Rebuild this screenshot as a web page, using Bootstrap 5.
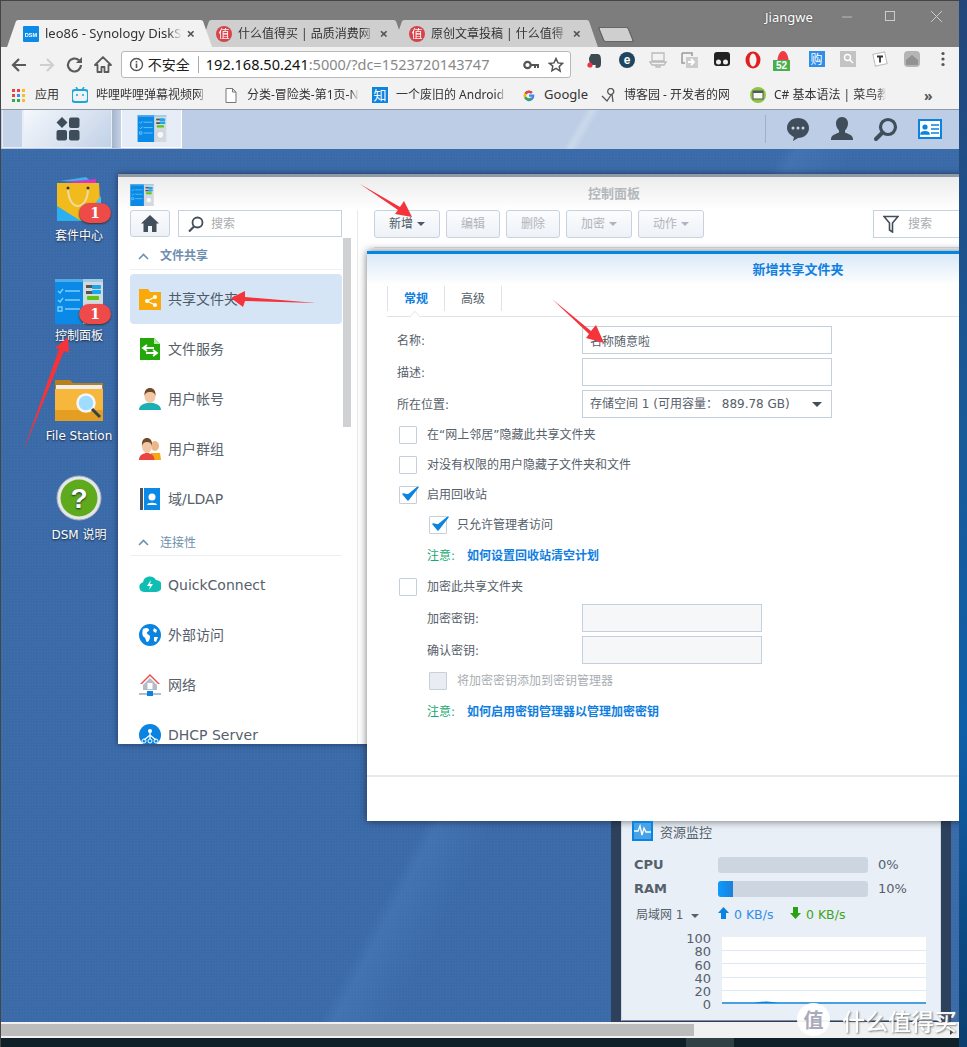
<!DOCTYPE html>
<html lang="zh"><head><meta charset="utf-8"><title>DSM</title>
<link href="https://cdn.jsdelivr.net/npm/bootstrap@5.3.0/dist/css/bootstrap.min.css" rel="stylesheet">
<style>
html,body{margin:0;height:1047px;width:967px;overflow:hidden;background:#2b5a94}
body{font-family:"Noto Sans","Noto Sans CJK SC",sans-serif;font-size:13px;color:#222}
.scr{position:relative;width:967px;height:1047px;overflow:hidden;background:linear-gradient(180deg,#22467a 0,#1a5a98 40%,#0e5fa8 70%,#0b3f6f 100%)}
.win{width:959px;height:1047px;background:#0f1f2a;border-left:1px solid #454545}
.titlebar{height:47px;background:#7d7d7d;border-top:1px solid #454545;position:relative}
.tabstrip{position:absolute;left:6px;bottom:0;height:27px;filter:drop-shadow(0 0 .6px #444)}
.ctab{width:205px;height:27px;background:#cfcfcf;margin-right:-12px;padding:0 17px 0 16px;clip-path:polygon(0 100%,9px 3%,11px 0,calc(100% - 11px) 0,calc(100% - 9px) 3%,100% 100%)}
.ctab.on{background:#f2f2f2;position:relative;z-index:2}
.ctabtxt{flex:1;white-space:nowrap;overflow:hidden;font-size:12px;color:#333;-webkit-mask-image:linear-gradient(90deg,#000 90%,transparent);mask-image:linear-gradient(90deg,#000 90%,transparent);margin-left:6px;font-family:"Noto Sans","Noto Sans CJK SC",sans-serif}
.ctab.on .ctabtxt{font-size:13px}
.ctabx{font-size:15px;color:#555;line-height:1;font-weight:700;margin-left:4px}
.newtab{width:30px;height:15px;background:#cfcfcf;margin:0 0 5px 15px;transform:skewX(22deg);border:1px solid #666;border-radius:2px;align-self:flex-end}
.wuser{position:absolute;left:764px;top:7px;color:#fff;font-size:13px;text-shadow:0 0 2px #444}
.wbtns{position:absolute;left:840px;top:9px;gap:30px}
.toolb{height:33px;background:#f2f2f2;padding:4px 0 0 4px}
.navic{width:28px;height:28px}
.omni{width:451px;height:27px;background:#fff;border:1px solid #b8b8b8;border-radius:3px;margin-left:4px;padding:0 6px 0 7px}
.sep1{width:1px;height:17px;background:#aaa;margin:0 7px 0 8px}
.urlt{font-size:14.5px;color:#888;white-space:nowrap;flex:1;overflow:hidden}
.urlt b{font-weight:400;color:#111}
.exts{margin-left:8px;width:380px}
.ext{width:32px;height:24px;position:relative}
.bmk{height:30px;background:#f2f2f2;border-bottom:1px solid #8d99a8;font-size:12px;color:#333;white-space:nowrap;padding-top:1px}
.bm{height:28px;flex:none;padding-left:0;overflow:hidden}
.bm span{display:block;flex:1;overflow:hidden;-webkit-mask-image:linear-gradient(90deg,#000 92%,transparent);mask-image:linear-gradient(90deg,#000 92%,transparent)}
.dbar{height:39px;background:#bccde5;position:relative}
.dbar::after{content:"";position:absolute;left:520px;top:0;width:120px;height:39px;background:linear-gradient(120deg,transparent 45%,#ccd9eb 50%,transparent 56%)}
.dcell{height:38px;border:1px solid #e8eef6;border-top:0;background:#c4d3e8}
.dhome{width:89px;background:linear-gradient(135deg,#f5f8fc,#c2d1e7)}
.dgap{width:9px;height:38px;background:linear-gradient(90deg,#a6b5ca,#c4d2e6)}
.dapp{width:61px;background:#e6edf6;border-color:#fff}
.dsep{width:1px;height:28px;background:#dfe7f2;border-left:1px solid #9fb0c8;margin-right:2px}
.dright{margin-left:auto;position:relative;z-index:1;padding-right:17px;gap:18px;height:38px}
.desk{position:relative;height:873px;overflow:hidden;background-color:#3b6aa9;background-image:linear-gradient(118deg,transparent 55%,rgba(80,130,190,.35) 56%,transparent 60%),radial-gradient(rgba(255,255,255,.05) 1px,transparent 1px);background-size:auto,3px 3px}
.dico{position:absolute;width:100px;text-align:center;color:#fff;font-size:12px;font-family:"DejaVu Sans","Noto Sans CJK SC",sans-serif;text-shadow:0 1px 2px #123}
.dico svg{display:block;margin:0 auto}
.dico .lbl{margin-top:5px;line-height:16px}
.redb{position:absolute;left:50px;width:32px;height:20px;border-radius:10px;background:#ee4a4a;color:#fff;text-align:center;font:700 14px/20px "DejaVu Serif",serif;box-shadow:0 1px 2px #333;text-shadow:none}
.cpw{position:absolute;left:117px;top:25px;width:992px;height:570px;background:#fff;border-top:3px solid #8f9aa5;box-shadow:0 0 6px rgba(0,0,0,.5);font-family:"DejaVu Sans","Noto Sans CJK SC",sans-serif}
.cphead{height:33px;background:linear-gradient(180deg,#ececec,#fff);padding-left:12px;position:relative}
.cptitle{position:absolute;left:0;right:0;top:7px;text-align:center;font-size:13px;font-weight:700;color:#b4b8bc}
.cpside{width:240px;padding-left:12px;position:relative;border-right:1px solid #e6e9ee;height:534px;overflow:hidden}
.sbar{position:absolute;left:225px;top:28px;width:8px;height:189px;background:#cfd1d3}
.hbtn{width:40px;height:27px;padding:0;border:1px solid #c6d2e0;background:linear-gradient(#fafbfc,#eef2f7);border-radius:3px}
.sbox{width:164px;height:27px;margin-left:8px;border:1px solid #c6d2e0;background:#fff;padding-left:9px;color:#a9acb0;font-size:12px;gap:7px}
.side{width:212px}
.sechd{height:32px;border-bottom:1px solid #eceff3;color:#6f8fae;font-size:12px;font-weight:700;padding:6px 0 0 8px;gap:11px;margin-bottom:4px}
.sechd.first{height:33px}
.sitem{height:50px;border:0;padding:0 0 0 9px;border-radius:4px;font-size:14px;color:#56606a;background:transparent;gap:7px;white-space:nowrap}
.sitem.active{background:#d5e5f6;color:#4d5b68;margin:0;z-index:0}
.sitem svg{flex:none}
.cpmain{flex:1;padding:0 0 0 16px}
.tbar{height:38px;border-bottom:1px solid #dbe3ee;gap:6px;align-items:flex-start}
.tbtn{--bs-btn-disabled-color:#b0b5bb;--bs-btn-disabled-border-color:#c6d2e0;--bs-btn-disabled-bg:#f4f6f9;--bs-btn-disabled-opacity:1;height:28px;padding:0 14px;font-size:12px;border:1px solid #c6d2e0;border-radius:3px;background:linear-gradient(#fbfcfd,#eef2f7);color:#b0b5bb;font-family:inherit;gap:4px;white-space:nowrap}
.tbtn.act{color:#4d5b68;margin-right:0}
.tsearch{margin-left:163px;width:222px;height:28px;border:1px solid #c6d2e0;background:#fff;padding-left:9px;color:#a9acb0;font-size:12px;gap:9px}
.crt{width:0;height:0;border:4px solid transparent;border-top-color:currentColor;border-bottom:0}
.dlg{position:absolute;left:366px;top:102px;width:862px;height:570px;background:#fff;border-top:3px solid #0086e5;box-shadow:0 0 8px rgba(0,0,0,.55);font-family:"DejaVu Sans","Noto Sans CJK SC",sans-serif;font-size:12px;color:#56606a}
.dlghd{height:31px;background:linear-gradient(#d9e9f8,#fff);text-align:center;color:#0f7ee0;font-weight:700;font-size:13px;line-height:32px;flex:none}
.dtabs{margin-left:20px;height:32px;border-bottom:1px solid #dfe3e8;align-items:flex-start;flex:none;position:relative}
.dtab{width:57px;height:25px;border-left:1px solid #dde3ea;text-align:center;line-height:26px;margin-top:1px}
.dtab.last{border-right:1px solid #dde3ea;width:58px}
.dtab.on{color:#0f7ee0;font-weight:700;position:relative}
.dtab.on::after{content:"";position:absolute;left:21px;top:25px;width:12px;height:12px;background:#fff;border:1px solid #dfe3e8;border-width:1px 0 0 1px;transform:rotate(45deg) scale(.7)}
.frow{padding-left:30px;height:28px;margin-bottom:4px}
.frow.sub{padding-left:60px}
.flbl{width:185px;flex:none;padding-top:1px}
.frow.sub .flbl{width:155px}
.finp{width:250px;height:28px;border:1px solid #c6d0dc;border-radius:0;padding:0 7px;font-size:12px;color:#56606a;font-family:inherit;box-shadow:none}
.finp.short{width:180px;background:#f5f7f9}
.fsel{gap:8px;justify-content:space-between;padding-right:9px}
.crow{height:30px;padding-left:32px;gap:10px;flex:none}
.crow.ind{padding-left:62px}
.crow.nt{padding-left:60px;padding-top:1px;gap:12px;font-weight:400}
.cbx{width:18px;height:18px;border:1px solid #c6d0dc;background:#fff;position:relative;flex:none;border-radius:1px}
.cbx.dis{background:#e9edf2}
.cbx svg{position:absolute;left:0;top:-3px}
.dimt{color:#a8adb3}
.note{color:#19a974}
.lnk{color:#0f7ee0;font-weight:700;text-decoration:none}
.dfoot{border-top:2px solid #e6e8eb;height:46px;flex:none;margin-top:auto}
.mon{position:absolute;left:610px;top:640px;width:340px;height:233px;background:#2d415d;padding:0 10px}
.monin{background:#e9eff7;height:232px;padding:64px 11px 0;font-family:"DejaVu Sans","Noto Sans CJK SC",sans-serif;font-size:12px;color:#56606a;border:1px solid #cfd8e4;border-top:0;border-bottom-color:#7f8da0}
.mrow{height:24px;font-weight:700;font-size:13px}
.mlab{width:85px;flex:none;padding-left:1px;color:#56606a}
.mbar{width:150px;height:16px;border-radius:3px;background:#cdd6e0;overflow:hidden;flex:none}
.mfill{height:100%;background:linear-gradient(90deg,#0d9bff,#1c7fdb)}
.mpct{font-weight:400;font-size:13px;margin-left:10px}
.charty{width:78px;flex:none;text-align:right;font-size:13px;line-height:13.3px}
.chartb{width:204px;height:67px;background:#fff;margin-left:11px;margin-top:5px}
.hsb{height:16px;background:#f1f1f1;padding:2px 0;position:relative}
.hsb i{display:block;width:693px;height:12px;background:#bcbcbc}
.hsb u{position:absolute;right:4px;top:5px;border:4px solid transparent;border-left:5px solid #444;border-right:0;text-decoration:none}
.osb{height:9px;background:#0f2029}
.osb i{display:block;margin-left:685px;width:48px;height:9px;background:#2f4144}
.rstrip{width:7px;height:1047px;flex:none}
.wm{position:absolute;left:797px;top:1003px;pointer-events:none;gap:12px}
.wmc{width:33px;height:33px;border-radius:50%;background:rgba(255,255,255,.93);color:#aab;font:700 20px/33px "Noto Sans CJK SC",sans-serif;text-align:center}
.wmt{color:#fff;font:500 23px/30px "Noto Sans CJK SC",sans-serif;text-shadow:1px 1px 2px #777;white-space:nowrap;opacity:.95}
.over{position:absolute;left:0;top:0;pointer-events:none}
</style></head><body>
<svg width="0" height="0" class="position-absolute">
<defs>
<symbol id="cp" viewBox="0 0 48 45"><rect width="28" height="45" fill="#0a8ae6"/><rect x="28" width="20" height="45" fill="#d3dade"/><rect width="48" height="3" fill="#7fc1ef" opacity=".6"/><g stroke="#7cd0ff" stroke-width="1.3" fill="none"><path d="M3 12l2 2 3-4M10 12h15M3 21l2 2 3-4M10 21h15M10 30h15M3 28h4v4H3z"/></g><rect x="31" y="6" width="12" height="3" fill="#555"/><rect x="37" y="6" width="9" height="4" rx="1" fill="#19a7f0"/><rect x="31" y="12" width="12" height="3" fill="#555"/><rect x="37" y="11" width="9" height="4" rx="1" fill="#19a7f0"/><rect x="32" y="17" width="12" height="4" rx="1" fill="#5cc414"/><circle cx="38" cy="33" r="6" fill="#f4f6f8" stroke="#bbc" /></symbol>
</defs></svg>
<div class="scr d-flex">
<div class="win d-flex flex-column">
 <div class="titlebar flex-none">
  <div class="tabstrip d-flex">
   <div class="ctab on d-flex align-items-center"><svg width="16" height="16" viewBox="0 0 16 16"><rect width="16" height="16" rx="1" fill="#0b8ae8"/><text x="8" y="10.5" font-size="5.6" font-weight="700" fill="#fff" text-anchor="middle" font-family="Liberation Sans">DSM</text></svg><span class="ctabtxt">leo86 - Synology DiskS</span><span class="ctabx">×</span></div>
   <div class="ctab d-flex align-items-center"><svg width="16" height="16" viewBox="0 0 16 16"><circle cx="8" cy="8" r="8" fill="#d8424a"/><text x="8" y="12" font-size="11" fill="#fff" text-anchor="middle" font-family="Noto Sans CJK SC">值</text></svg><span class="ctabtxt">什么值得买 | 品质消费网</span><span class="ctabx">×</span></div>
   <div class="ctab d-flex align-items-center"><svg width="16" height="16" viewBox="0 0 16 16"><circle cx="8" cy="8" r="8" fill="#d8424a"/><text x="8" y="12" font-size="11" fill="#fff" text-anchor="middle" font-family="Noto Sans CJK SC">值</text></svg><span class="ctabtxt">原创文章投稿 | 什么值得</span><span class="ctabx">×</span></div>
   <div class="newtab"></div>
  </div>
  <div class="wuser">Jiangwe</div>
  <div class="wbtns d-flex align-items-center">
   <svg width="12" height="12"><path d="M1 6h10" stroke="#bbb"/></svg>
   <svg width="12" height="12" style="margin-left:2px"><rect x=".5" y=".5" width="9" height="9" fill="none" stroke="#ccc"/></svg>
   <svg width="14" height="14" style="margin-left:3px"><path d="M1 1l11 11M12 1L1 12" stroke="#ccc"/></svg>
  </div>
 </div>
 <div class="toolb d-flex flex-none">
  <svg class="navic" viewBox="0 0 28 28"><path d="M21 14H9M14 8l-6 6 6 6" fill="none" stroke="#5a5a5a" stroke-width="2.2"/></svg>
  <svg class="navic" viewBox="0 0 28 28"><path d="M7 14h12M14 8l6 6-6 6" fill="none" stroke="#cfcfcf" stroke-width="2.2"/></svg>
  <svg class="navic" viewBox="0 0 28 28"><path d="M20 14a6.5 6.5 0 1 1-2-4.7" fill="none" stroke="#5a5a5a" stroke-width="2.2"/><path d="M21 6v6h-6z" fill="#5a5a5a"/></svg>
  <svg class="navic" viewBox="0 0 28 28"><path d="M14 6L6 14h2.5v7h4v-5h3v5h4v-7H22z" fill="none" stroke="#5a5a5a" stroke-width="1.8" stroke-linejoin="round"/></svg>
  <div class="omni d-flex align-items-center flex-none">
   <svg width="15" height="15" viewBox="0 0 15 15"><circle cx="7.5" cy="7.5" r="6" fill="none" stroke="#555" stroke-width="1.4"/><path d="M7.5 6.5v4.5M7.5 4v1.6" stroke="#555" stroke-width="1.6"/></svg>
   <span class="ms-1" style="font-size:14px">不安全</span><span class="sep1"></span>
   <span class="urlt"><b>192.168.50.241</b>:5000/?dc=1523720143747</span>
   <svg width="17" height="12" viewBox="0 0 17 12" class="ms-1"><circle cx="4.5" cy="6" r="3.2" fill="none" stroke="#555" stroke-width="2.2"/><path d="M8 6h8M12 6v3M15 6v3" stroke="#555" stroke-width="2"/></svg>
   <svg width="16" height="16" viewBox="0 0 16 16" class="ms-2"><path d="M8 1.5l2 4.4 4.6.5-3.4 3.2.9 4.6L8 11.4 3.900 13.700l.9-4.600L1.400 6.400l4.600-.5z" fill="none" stroke="#555" stroke-width="1.5"/></svg>
  </div>
  <div class="exts d-flex align-items-center" style="height:24px">
   <div class="ext d-flex justify-content-center"><svg width="16" height="18" viewBox="0 0 16 18"><path d="M4 3h6c3 0 4 2 4 6v4c0 3-2 4-4 4-2 0-2-2-1-3H6C3 14 2 11 2 7z" fill="#3d4a52"/><circle cx="3" cy="14" r="2.600" fill="#f03040"/></svg></div>
   <div class="ext d-flex justify-content-center"><svg width="18" height="18" viewBox="0 0 18 18"><circle cx="9" cy="9" r="8" fill="#20465f"/><text x="9" y="13" font-size="12" font-weight="700" fill="#fff" text-anchor="middle" font-family="Liberation Sans">e</text></svg></div>
   <div class="ext d-flex justify-content-center"><svg width="18" height="18" viewBox="0 0 18 18"><path d="M3 2h12v8H3zM1 11h16l-2 3H3zM7 14h4v2H7z" fill="none" stroke="#bbb" stroke-width="1.3"/></svg></div>
   <div class="ext d-flex justify-content-center"><svg width="18" height="18" viewBox="0 0 18 18"><path d="M1 2h10v3M1 2v10h3" fill="none" stroke="#999" stroke-width="1.5"/><rect x="5" y="6" width="12" height="11" fill="#ccc"/><path d="M7 11h5M10 8l3 3-3 3" fill="none" stroke="#fff" stroke-width="1.800"/></svg></div>
   <div class="ext d-flex justify-content-center"><svg width="16" height="16" viewBox="0 0 16 16"><rect y="1" width="16" height="14" rx="3" fill="#222"/><circle cx="4.500" cy="11" r="2.500" fill="#eee"/><circle cx="11.500" cy="11" r="2.500" fill="#eee"/></svg></div>
   <div class="ext d-flex justify-content-center"><svg width="16" height="18" viewBox="0 0 16 18"><ellipse cx="8" cy="9" rx="7.500" ry="8.500" fill="#e02020"/><ellipse cx="8" cy="9" rx="3.500" ry="6.500" fill="#f3f3f3"/></svg></div>
   <div class="ext d-flex justify-content-center"><svg width="12" height="16" viewBox="0 0 12 16" class="position-absolute" style="left:8px;top:-1px"><path d="M6 1c3 0 5.500 5 5.500 9s-2 5-5.500 5S.5 14 .5 10 3 1 6 1z" fill="#ee3c45"/></svg><span class="position-absolute text-white text-center" style="left:4px;top:9px;width:17px;height:11px;background:#4aae4e;font:700 10px/11px 'Liberation Sans',sans-serif">52</span></div>
   <div class="ext d-flex justify-content-center"><span class="text-white text-center" style="width:16px;height:16px;background:#2f8ee8;font:12px/16px 'Noto Sans CJK SC',sans-serif">购</span></div>
   <div class="ext d-flex justify-content-center"><svg width="16" height="16" viewBox="0 0 16 16"><rect width="16" height="16" fill="#c3c3c3"/><circle cx="7.500" cy="6.500" r="3" fill="none" stroke="#fff" stroke-width="1.400"/><path d="M10 9l3 3" stroke="#fff" stroke-width="1.500"/></svg></div>
   <div class="ext d-flex justify-content-center"><svg width="16" height="16" viewBox="0 0 16 16"><rect x="2" y="2" width="12" height="12" fill="#fff" stroke="#bbb" transform="rotate(-12 8 8)"/><path d="M5 5.500h6M8 5.500v6" stroke="#333" stroke-width="1.800"/></svg></div>
   <div class="ext d-flex justify-content-center"><svg width="16" height="16" viewBox="0 0 16 16"><rect width="16" height="16" rx="4" fill="#b5b5b5"/><path d="M2 9l6-5 6 5v5H2z" fill="#929292"/></svg></div>
   <div class="ext d-flex justify-content-center"><svg width="4" height="16" viewBox="0 0 4 16"><circle cx="2" cy="2.500" r="1.600" fill="#555"/><circle cx="2" cy="8" r="1.600" fill="#555"/><circle cx="2" cy="13.500" r="1.600" fill="#555"/></svg></div>
  </div>
 </div>
 <div class="bmk d-flex align-items-center flex-none">
  <div class="bm d-flex align-items-center" style="margin-left:11px;width:47px;gap:10px"><svg width="13" height="13" viewBox="0 0 13 13"><g><rect width="3" height="3" fill="#e8453c"/><rect x="5" width="3" height="3" fill="#e8453c"/><rect x="10" width="3" height="3" fill="#f9bb2d"/><rect y="5" width="3" height="3" fill="#e8453c"/><rect x="5" y="5" width="3" height="3" fill="#4285f4"/><rect x="10" y="5" width="3" height="3" fill="#f9bb2d"/><rect y="10" width="3" height="3" fill="#34a853"/><rect x="5" y="10" width="3" height="3" fill="#34a853"/><rect x="10" y="10" width="3" height="3" fill="#f9bb2d"/></g></svg>应用</div>
  <div class="bm d-flex align-items-center" style="margin-left:13px;width:134px;gap:8px"><svg width="16" height="16" viewBox="0 0 16 16" class="flex-none"><rect y="3" width="16" height="12" rx="3" fill="none" stroke="#1ca6dd" stroke-width="2"/><path d="M4 0l2 3M12 0l-2 3" stroke="#1ca6dd" stroke-width="1.500"/><path d="M5 7v2M11 7v2" stroke="#1ca6dd" stroke-width="1.500"/></svg><span>哔哩哔哩弹幕视频网</span></div>
  <div class="bm d-flex align-items-center" style="margin-left:19px;width:134px;gap:10px"><svg width="12" height="15" viewBox="0 0 12 15" class="flex-none"><path d="M1 .5h6.500L11 4v10.500H1zM7.500.5V4H11" fill="#fff" stroke="#777"/></svg><span>分类-冒险类-第1页-N</span></div>
  <div class="bm d-flex align-items-center" style="margin-left:13px;width:134px;gap:8px"><span class="text-white text-center flex-none" style="flex:none;width:16px;height:16px;background:#0e84e0;font:13px/16px 'Noto Sans CJK SC',sans-serif;-webkit-mask-image:none;mask-image:none">知</span><span>一个废旧的 Android</span></div>
  <div class="bm d-flex align-items-center" style="margin-left:17px;width:65px;gap:9px;font-size:13px"><svg width="15" height="15" viewBox="0 0 15 15" class="flex-none"><path d="M13.500 6.200H7.500v2.800h3.400a3.600 3.600 0 1 1-1-3.700l2-2A6.500 6.500 0 1 0 14 7.500c0-.5 0-.9-.5-1.300z" fill="#4285f4"/><path d="M1.800 4.200l2.400 1.800a3.600 3.600 0 0 1 5.700-.7l2-2a6.500 6.500 0 0 0-10.100.9z" fill="#ea4335"/><path d="M1.800 10.800l2.400-1.800a3.600 3.600 0 0 1 0-3L1.800 4.200a6.500 6.500 0 0 0 0 6.600z" fill="#fbbc05"/><path d="M1.800 10.800a6.500 6.500 0 0 0 10 1l-2.200-1.700a3.600 3.600 0 0 1-5.400-1.100z" fill="#34a853"/></svg>Google</div>
  <div class="bm d-flex align-items-center" style="margin-left:13px;width:135px;gap:8px"><svg width="15" height="15" viewBox="0 0 15 15" class="flex-none"><path d="M1 8l5 5 4-6M8 1a3 3 0 1 1 0 5 3 3 0 0 1 0-5M11 6l1 8" fill="none" stroke="#555" stroke-width="1.300"/></svg><span>博客园 - 开发者的网</span></div>
  <div class="bm d-flex align-items-center" style="margin-left:14px;width:136px;gap:8px"><svg width="16" height="16" viewBox="0 0 16 16" class="flex-none"><circle cx="8" cy="8" r="8" fill="#8ec63f"/><rect x="3" y="4" width="10" height="8" fill="#f4f8ee" stroke="#556"/><rect x="3" y="4" width="10" height="2" fill="#556"/></svg><span>C# 基本语法 | 菜鸟教</span></div>
  <div class="flex-none fw-bold" style="margin-left:38px;color:#555;font-size:14px">»</div>
 </div>
 <div class="dbar d-flex align-items-start flex-none">
  <div class="dcell" style="width:21px;margin-left:1px"></div>
  <div class="dcell dhome d-flex align-items-center justify-content-center"><svg width="24" height="24" viewBox="0 0 24 24"><path d="M6 0l5.500 5.500L6 11 .5 5.500z" fill="#3f4c5a"/><rect x="13" y="0.500" width="10.500" height="10.500" rx="2" fill="#3f4c5a"/><rect x=".5" y="13" width="10.500" height="10.500" rx="2" fill="#3f4c5a"/><rect x="13" y="13" width="10.500" height="10.500" rx="2" fill="#3f4c5a"/></svg></div>
  <div class="dgap"></div>
  <div class="dcell dapp d-flex align-items-center justify-content-center"><svg width="32" height="27"><use href="#cp"/></svg></div>
  <div class="dright d-flex align-items-center">
   <div class="dsep"></div>
   <svg width="24" height="24" viewBox="0 0 24 24"><path d="M12 1c6 0 11 4 11 10s-5 10-11 10l-5 3 1-4C4 18 1 15 1 11 1 5 6 1 12 1z" fill="#404d5b"/><circle cx="7" cy="11" r="1.500" fill="#c6d4e7"/><circle cx="12" cy="11" r="1.500" fill="#c6d4e7"/><circle cx="17" cy="11" r="1.500" fill="#c6d4e7"/></svg>
   <svg width="24" height="24" viewBox="0 0 24 24" style="margin-left:2px"><path d="M12 0c4 0 6 3 6 6.500 0 3-1.500 5.500-3 7v2c3 1.500 8 2.500 8 6.500v1H1v-1c0-4 5-5 8-6.500v-2c-1.500-1.500-3-4-3-7C6 3 8 0 12 0z" fill="#404d5b"/></svg>
   <svg width="24" height="24" viewBox="0 0 24 24" style="margin-left:2px"><circle cx="14" cy="10" r="7.500" fill="none" stroke="#404d5b" stroke-width="3.200"/><path d="M8.500 15.500L2 22" stroke="#404d5b" stroke-width="4" stroke-linecap="round"/></svg>
   <svg width="24" height="20" viewBox="0 0 24 20" style="margin-left:2px"><rect x="1" y="1" width="22" height="18" fill="#fff" stroke="#0a84e0" stroke-width="2"/><circle cx="7" cy="8" r="2.600" fill="#0a84e0"/><path d="M3 15c0-3 8-3 8 0zM13 6h8M13 10h8M13 14h8" fill="#0a84e0" stroke="#0a84e0" stroke-width="1.500"/></svg>
  </div>
 </div>
 <div class="desk flex-none">
  <div class="dico" style="left:28px;top:27px"><svg width="46" height="46" viewBox="0 0 46 46"><path d="M4 5l26-4 6 5z" fill="#37b5e8"/><path d="M8 6l32-3v6z" fill="#d636c8"/><path d="M1 7h42l2 38H1z" fill="#f2bb1d"/><path d="M1 30l24 15H1z" fill="#2ab0ee"/><path d="M45 20l0 25H24z" fill="#3fc2f4"/><path d="M12 12c0 24 20 24 20 0" fill="none" stroke="#f1d9a0" stroke-width="2"/><circle cx="12" cy="12" r="1.500" fill="#333"/><circle cx="32" cy="12" r="1.500" fill="#333"/></svg><span class="redb" style="top:27px">1</span><div class="lbl" style="margin-top:6px">套件中心</div></div>
  <div class="dico" style="left:28px;top:130px"><svg width="48" height="45"><use href="#cp"/></svg><span class="redb" style="top:25px">1</span><div class="lbl" style="margin-top:4px">控制面板</div></div>
  <div class="dico" style="left:28px;top:231px"><svg width="48" height="41" viewBox="0 0 48 41"><path d="M0 0h15l3 3h30v38H0z" fill="#b87f1d"/><rect x="1" y="5" width="46" height="6" fill="#eee"/><path d="M0 9h48v32H0z" fill="#f6b73c"/><path d="M0 30h48v11H0z" fill="#e49f22"/><circle cx="31" cy="23" r="8.500" fill="#9fdcff" stroke="#f6f6f6" stroke-width="2.500"/><path d="M37 29l8 8" stroke="#33404d" stroke-width="3"/></svg><div class="lbl" style="margin-top:7px">File Station</div></div>
  <div class="dico" style="left:28px;top:326px"><svg width="46" height="46" viewBox="0 0 46 46"><circle cx="23" cy="23" r="22" fill="#e3e7ea" stroke="#a8aeb3"/><circle cx="23" cy="23" r="18.500" fill="#5faa1c"/><text x="23" y="33" font-size="28" font-weight="700" fill="#fff" text-anchor="middle" font-family="Liberation Sans">?</text></svg><div class="lbl" style="margin-top:6px">DSM 说明</div></div>

  <div class="mon"><div class="monin">
   <div class="mrow d-flex align-items-center"><span class="mlab">CPU</span><div class="mbar"></div><span class="mpct">0%</span></div>
   <div class="mrow d-flex align-items-center"><span class="mlab">RAM</span><div class="mbar"><div class="mfill" style="width:10%"></div></div><span class="mpct">10%</span></div>
   <div class="d-flex align-items-center" style="height:28px;font-size:12px"><span style="width:84px;padding-left:3px">局域网 1 <span class="crt d-inline-block ms-1 align-middle"></span></span><span style="color:#2f8ee8;width:72px;font-size:12.500px"><svg width="13" height="12" viewBox="0 0 13 12" class="align-baseline"><path d="M6.500 0L12 6H9v6H4V6H1z" fill="#0a84e0"/></svg> 0 KB/s</span><span style="color:#3ea51a;font-size:12.500px"><svg width="13" height="12" viewBox="0 0 13 12" class="align-baseline"><path d="M6.500 12L12 6H9V0H4v6H1z" fill="#2aa012"/></svg> 0 KB/s</span></div>
   <div class="d-flex" style="margin-top:3px">
    <div class="charty"><div>100</div><div>80</div><div>60</div><div>40</div><div>20</div><div>0</div></div>
    <svg class="chartb" viewBox="0 0 204 67"><path d="M0 13.500h204M0 26.500h204M0 40.500h204M0 53.500h204" stroke="#dfe8f2"/><path d="M0 66h204" stroke="#0a7fdb" stroke-width="1.500"/><path d="M32 66q13-3 24 0z" fill="#0a7fdb"/></svg>
   </div>
  </div></div>

  <div class="cpw">
   <div class="cphead d-flex align-items-center"><svg width="24" height="22" class="position-relative" style="top:1px"><use href="#cp"/></svg><div class="cptitle">控制面板</div></div>
   <div class="d-flex">
    <div class="cpside">
     <div class="sbar"></div>
     <div class="d-flex side">
      <button class="btn hbtn d-flex align-items-center justify-content-center"><svg width="18" height="17" viewBox="0 0 18 17"><path d="M9 0L0 8.500h2.500V17h4.500v-6h4v6h4.500V8.500H18z" fill="#424e5a"/></svg></button>
      <div class="sbox d-flex align-items-center"><svg width="16" height="16" viewBox="0 0 16 16"><circle cx="9.500" cy="6.500" r="5" fill="none" stroke="#424e5a" stroke-width="1.800"/><path d="M6 10.500l-5 5" stroke="#424e5a" stroke-width="2.200"/></svg>搜索</div>
     </div>
     <div class="list-group side">
      <div class="sechd first d-flex align-items-center"><svg width="11" height="7" viewBox="0 0 11 7"><path d="M1 6l4.500-4.500L10 6" fill="none" stroke="#6f8fae" stroke-width="1.600"/></svg>文件共享</div>
      <div class="list-group-item sitem active d-flex align-items-center"><svg width="22" height="22" viewBox="0 0 22 22"><path d="M0 1h9l2 3h11v18H0z" fill="#f9a90a"/><circle cx="8" cy="13" r="2" fill="#fff"/><circle cx="16" cy="9" r="2" fill="#fff"/><circle cx="16" cy="17" r="2" fill="#fff"/><path d="M16 9l-8 4 8 4" fill="none" stroke="#fff" stroke-width="1.300"/></svg>共享文件夹</div>
      <div class="list-group-item sitem d-flex align-items-center"><svg width="22" height="22" viewBox="0 0 22 22"><path d="M1 0h14l6 6v16H1z" fill="#23a80a"/><path d="M15 0v6h6z" fill="#b9eaa9"/><path d="M5 10h10M8 7l-4 3 4 3M17 15H7M14 12l4 3-4 3" fill="none" stroke="#fff" stroke-width="1.800"/></svg>文件服务</div>
      <div class="list-group-item sitem d-flex align-items-center"><svg width="22" height="22" viewBox="0 0 22 22"><path d="M0 22c0-5 5-6 7.500-7h7c2.500 1 7.500 2 7.500 7z" fill="#1bb0b4"/><ellipse cx="11" cy="8" rx="5.500" ry="7" fill="#f1c8a3"/><path d="M5.500 8C5 2 8 0 11 0s6 2 5.500 8c-1-3-2-4-5.500-4S6.500 5 5.500 8z" fill="#6d4a2b"/></svg>用户帐号</div>
      <div class="list-group-item sitem d-flex align-items-center"><svg width="22" height="22" viewBox="0 0 22 22"><ellipse cx="16" cy="8" rx="4" ry="5" fill="#eab78a"/><path d="M12 15h9l1 7H12z" fill="#f4a912"/><path d="M0 22c0-5 4-6 6.500-7h3c2.500 1 6 2 6 7z" fill="#ea4540"/><ellipse cx="8" cy="8" rx="5" ry="7" fill="#f1c8a3"/><path d="M3 8C2.500 2 5 0 8 0s5.500 2 5 8c-1-3-2-4-5-4S4 5 3 8z" fill="#6d4a2b"/></svg>用户群组</div>
      <div class="list-group-item sitem d-flex align-items-center"><svg width="22" height="22" viewBox="0 0 22 22"><rect x="1" width="3" height="22" fill="#475563"/><rect x="5" width="16" height="22" fill="#0a8ae6"/><circle cx="13" cy="9" r="3.500" fill="#fff"/><path d="M8 17c0-3 10-3 10 0z" fill="#fff"/></svg>域/LDAP</div>
      <div class="sechd d-flex align-items-center"><svg width="11" height="7" viewBox="0 0 11 7"><path d="M1 6l4.500-4.500L10 6" fill="none" stroke="#6f8fae" stroke-width="1.600"/></svg><span class="fw-normal">连接性</span></div>
      <div class="list-group-item sitem d-flex align-items-center"><svg width="22" height="22" viewBox="0 0 22 22"><path d="M5 18a5 5 0 0 1-1-9.800A7 7 0 0 1 17 6a5.500 5.500 0 0 1 0 12z" fill="#10bdb5"/><path d="M12 6l-4 6h3l-1 4 4-6h-3z" fill="#fff"/></svg>QuickConnect</div>
      <div class="list-group-item sitem d-flex align-items-center"><svg width="22" height="22" viewBox="0 0 22 22"><circle cx="11" cy="11" r="11" fill="#0a84e0"/><path d="M4 5c3-2 6-1 6 1s-2 1-2 3 3 1 3 4-2 5-3 5-1-4-3-5-2-5-1-8zM15 4l3 2-1 3-3-2zM15 13h4l-2 5-2-1z" fill="#fff"/></svg>外部访问</div>
      <div class="list-group-item sitem d-flex align-items-center"><svg width="22" height="22" viewBox="0 0 22 22"><path d="M11 0L1 10h2l8-8 8 8h2z" fill="#ee4a4a"/><path d="M4 11l7-7 7 7v5H4z" fill="#b4bcc6"/><rect x="8.500" y="9" width="5" height="6" fill="#fff"/><rect y="19" width="22" height="2" fill="#b4bcc6"/><rect x="8" y="17" width="6" height="5" fill="#0a84e0"/></svg>网络</div>
      <div class="list-group-item sitem d-flex align-items-center"><svg width="22" height="22" viewBox="0 0 22 22"><circle cx="11" cy="11" r="11" fill="#0a84e0"/><circle cx="11" cy="7" r="2" fill="#fff"/><path d="M11 8v7M5 16l6-5 6 5" fill="none" stroke="#fff" stroke-width="1.300"/><circle cx="5" cy="17" r="2" fill="none" stroke="#fff"/><circle cx="11" cy="17" r="2" fill="none" stroke="#fff"/><circle cx="17" cy="17" r="2" fill="none" stroke="#fff"/></svg>DHCP Server</div>
     </div>
    </div>
    <div class="cpmain">
     <div class="tbar d-flex">
      <button class="btn tbtn act d-flex align-items-center">新增<i class="crt"></i></button>
      <button class="btn tbtn" disabled>编辑</button>
      <button class="btn tbtn" disabled>删除</button>
      <button class="btn tbtn d-flex align-items-center" disabled>加密<i class="crt"></i></button>
      <button class="btn tbtn d-flex align-items-center" disabled>动作<i class="crt"></i></button>
      <div class="tsearch d-flex align-items-center"><svg width="16" height="18" viewBox="0 0 16 18"><path d="M1 1.500h14L9.500 8v9l-3-2V8z" fill="none" stroke="#424e5a" stroke-width="1.600"/></svg>搜索</div>
     </div>
    </div>
   </div>
  </div>

  <div class="dlg d-flex flex-column">
   <div class="dlghd">新增共享文件夹</div>
   <div class="dtabs d-flex"><div class="dtab on">常规</div><div class="dtab last">高级</div></div>
   <div style="height:9px" class="flex-none"></div>
   <div class="frow d-flex align-items-center"><span class="flbl">名称:</span><input class="form-control finp" value="名称随意啦"></div>
   <div class="frow d-flex align-items-center"><span class="flbl">描述:</span><input class="form-control finp"></div>
   <div class="frow d-flex align-items-center mb-0"><span class="flbl">所在位置:</span><div class="finp fsel d-flex align-items-center">存储空间 1 (可用容量： 889.78 GB)<i class="crt" style="border-width:5px 5px 0;color:#424e5a"></i></div></div>
   <div style="height:2px" class="flex-none"></div>
   <div class="crow d-flex align-items-center"><span class="cbx"></span>在“网上邻居”隐藏此共享文件夹</div>
   <div class="crow d-flex align-items-center"><span class="cbx"></span>对没有权限的用户隐藏子文件夹和文件</div>
   <div class="crow d-flex align-items-center"><span class="cbx"><svg width="20" height="20" viewBox="0 0 20 20"><path d="M3 10l5 6L18 3 8 11z" fill="#0a84e0" stroke="#0a84e0" stroke-width="1.500" stroke-linejoin="round"/></svg></span>启用回收站</div>
   <div class="crow ind d-flex align-items-center"><span class="cbx"><svg width="20" height="20" viewBox="0 0 20 20"><path d="M3 10l5 6L18 3 8 11z" fill="#0a84e0" stroke="#0a84e0" stroke-width="1.500" stroke-linejoin="round"/></svg></span>只允许管理者访问</div>
   <div class="crow nt d-flex align-items-center"><span class="note">注意:</span><a href="#" class="lnk">如何设置回收站清空计划</a></div>
   <div style="height:2px" class="flex-none"></div>
   <div class="crow d-flex align-items-center"><span class="cbx"></span>加密此共享文件夹</div>
   <div style="height:2px" class="flex-none"></div>
   <div class="frow sub d-flex align-items-center"><span class="flbl">加密密钥:</span><div class="finp short"></div></div>
   <div class="frow sub d-flex align-items-center mb-0"><span class="flbl">确认密钥:</span><div class="finp short"></div></div>
   <div style="height:2px" class="flex-none"></div>
   <div class="crow ind d-flex align-items-center dimt"><span class="cbx dis"></span>将加密密钥添加到密钥管理器</div>
   <div class="crow nt d-flex align-items-center"><span class="note">注意:</span><a href="#" class="lnk">如何启用密钥管理器以管理加密密钥</a></div>
   <div class="dfoot"></div>
  </div>
  <div class="position-absolute d-flex align-items-center" style="left:631px;top:672px;gap:7px;font:13px 'DejaVu Sans','Noto Sans CJK SC',sans-serif;color:#56606a"><svg width="21" height="20" viewBox="0 0 21 20"><rect width="21" height="20" fill="#0a84e0"/><rect x="2" y="2" width="17" height="16" fill="#fff" opacity=".25"/><path d="M2 10h4l2-5 2 9 2-7 2 4h5" fill="none" stroke="#fff" stroke-width="1.300"/></svg>资源监控</div>
 </div>
 <div class="hsb flex-none"><i></i><u></u></div>
 <div class="osb flex-none"><i></i></div>
</div>
<div class="rstrip"></div>
<div class="wm d-flex align-items-center"><div class="wmc">值</div><div class="wmt">什么值得买</div></div>
<svg class="over" width="967" height="1047" viewBox="0 0 967 1047"><g fill="#f4333a"><path d="M23 452L59 349 55 348 68 337 69 353 64 351z"/><path d="M316 303L245 301 243 307 231 298 245 291 245 297z"/><path d="M360 184L400 207 404 201 412 217 395 214 398 210z"/><path d="M552 299L591 331 596 325 604 343 586 338 589 334z"/></g></svg>
</div>
</body></html>
